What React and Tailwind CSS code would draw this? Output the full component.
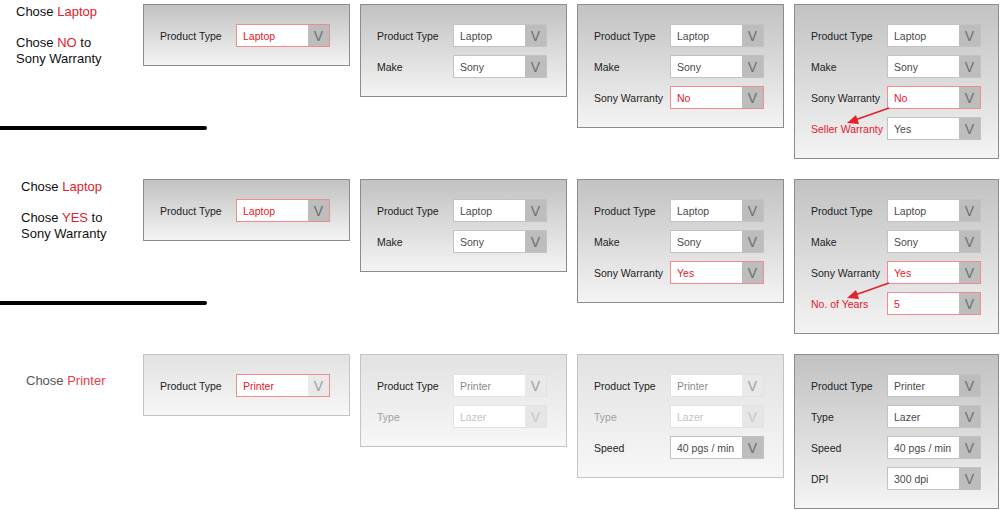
import React from 'react';

const RED = 'text-[#e3202b]';

const Select = ({ value, red, dim }) => (
  <div
    className={`flex h-[23px] w-[94px] border bg-white ${
      red ? 'border-[#ef8c8f]' : dim ? 'border-[#e2e2e2]' : 'border-[#c2c2c2]'
    }`}
  >
    <span
      className={`flex flex-1 items-center pl-[6px] text-[10.5px] ${
        red ? RED : dim === 2 ? 'text-[#c4c4c4]' : dim ? 'text-[#8a8a8a]' : 'text-[#4a4a4a]'
      }`}
    >
      {value}
    </span>
    <span
      className={`flex w-[21px] items-center justify-center text-[14px] ${
        dim === 2 ? 'bg-[#e6e6e6] text-[#c8c8c8]' : dim ? 'bg-[#e9e9e9] text-[#a0a0a0]' : 'bg-[#bdbdbd] text-[#6e6e6e]'
      }`}
    >
      V
    </span>
  </div>
);

const Row = ({ label, value, red, redLabel, dim }) => (
  <div className="flex items-center">
    <span
      className={`w-[76px] whitespace-nowrap text-[10.5px] ${
        redLabel ? RED : dim === 2 ? 'text-[#a0a0a0]' : 'text-[#222]'
      }`}
    >
      {label}
    </span>
    <Select value={value} red={red} dim={dim} />
  </div>
);

const Arrow = () => (
  <svg className="pointer-events-none absolute left-0 top-0" width="120" height="140">
    <line x1="94" y1="103" x2="60" y2="115" stroke="#e3202b" strokeWidth="1.6" />
    <polygon points="52,118 61,110 64,119" fill="#e3202b" />
  </svg>
);

const Panel = ({ rows, faded, w = 'w-[207px]', arrow }) => (
  <div
    className={`relative ${w} shrink-0 border pl-4 pt-[19px] pb-[18px] ${
      faded
        ? 'border-[#c4c4c4] bg-linear-to-b from-[#e2e2e2] to-[#f7f7f7]'
        : 'border-[#8c8c8c] bg-linear-to-b from-[#c2c2c2] to-[#f4f4f4]'
    }`}
  >
    <div className="flex flex-col gap-2">
      {rows.map((r) => (
        <Row key={r.label} {...r} />
      ))}
    </div>
    {arrow && <Arrow />}
  </div>
);

const laptop = (red) => ({ label: 'Product Type', value: 'Laptop', red });
const sony = { label: 'Make', value: 'Sony' };

const Line = () => <div className="mt-[59px] h-[4px] w-[207px] rounded-r-full bg-black" />;

export default function App() {
  return (
    <div className="h-[510px] w-[1000px] overflow-hidden bg-white font-['Liberation_Sans',Arial,sans-serif] text-[13px] leading-4 text-[#111]">
      {/* laptop, no warranty */}
      <section className="flex h-[175px] items-start pt-1">
        <div className="w-[143px] shrink-0">
          <div className="pl-4">
            <p>
              Chose <span className={RED}>Laptop</span>
            </p>
            <p className="mt-[15px]">
              Chose <span className={RED}>NO</span> to
              <br />
              Sony Warranty
            </p>
          </div>
          <Line />
        </div>
        <div className="flex items-start gap-[10px]">
          <Panel rows={[laptop(true)]} />
          <Panel rows={[laptop(), sony]} />
          <Panel rows={[laptop(), sony, { label: 'Sony Warranty', value: 'No', red: true }]} />
          <Panel
            w="w-[205px]"
            arrow
            rows={[
              laptop(),
              sony,
              { label: 'Sony Warranty', value: 'No', red: true },
              { label: 'Seller Warranty', value: 'Yes', redLabel: true },
            ]}
          />
        </div>
      </section>

      {/* laptop, yes warranty */}
      <section className="flex h-[175px] items-start pt-1">
        <div className="w-[143px] shrink-0">
          <div className="pl-[21px]">
            <p>
              Chose <span className={RED}>Laptop</span>
            </p>
            <p className="mt-[15px]">
              Chose <span className={RED}>YES</span> to
              <br />
              Sony Warranty
            </p>
          </div>
          <Line />
        </div>
        <div className="flex items-start gap-[10px]">
          <Panel rows={[laptop(true)]} />
          <Panel rows={[laptop(), sony]} />
          <Panel rows={[laptop(), sony, { label: 'Sony Warranty', value: 'Yes', red: true }]} />
          <Panel
            w="w-[205px]"
            arrow
            rows={[
              laptop(),
              sony,
              { label: 'Sony Warranty', value: 'Yes', red: true },
              { label: 'No. of Years', value: '5', red: true, redLabel: true },
            ]}
          />
        </div>
      </section>

      {/* printer */}
      <section className="flex h-[160px] items-start pt-1">
        <div className="w-[143px] shrink-0 pl-[26px] pt-[19px]">
          <p className="text-[#555]">
            Chose <span className="text-[#e8404a]">Printer</span>
          </p>
        </div>
        <div className="flex items-start gap-[10px]">
          <Panel faded rows={[{ label: 'Product Type', value: 'Printer', red: true, dim: 1 }]} />
          <Panel
            faded
            rows={[
              { label: 'Product Type', value: 'Printer', dim: 1 },
              { label: 'Type', value: 'Lazer', dim: 2 },
            ]}
          />
          <Panel
            faded
            rows={[
              { label: 'Product Type', value: 'Printer', dim: 1 },
              { label: 'Type', value: 'Lazer', dim: 2 },
              { label: 'Speed', value: '40 pgs / min' },
            ]}
          />
          <Panel
            w="w-[205px]"
            rows={[
              { label: 'Product Type', value: 'Printer' },
              { label: 'Type', value: 'Lazer' },
              { label: 'Speed', value: '40 pgs / min' },
              { label: 'DPI', value: '300 dpi' },
            ]}
          />
        </div>
      </section>
    </div>
  );
}
